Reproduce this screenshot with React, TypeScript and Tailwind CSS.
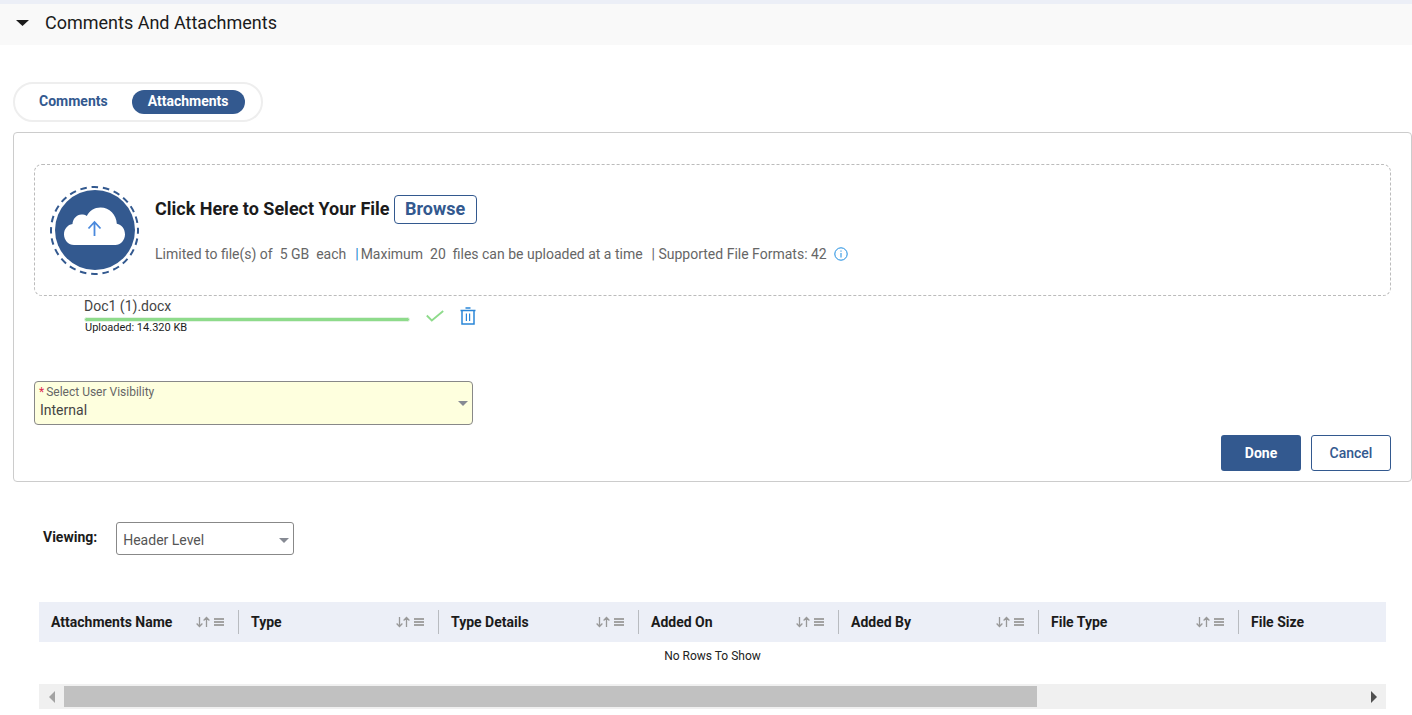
import { useState } from 'react';

const columns = ['Attachments Name', 'Type', 'Type Details', 'Added On', 'Added By', 'File Type', 'File Size'];

const tabs = ['Comments', 'Attachments'];

function UploadBadge() {
  return (
    <svg className="h-[90px] w-[90px] shrink-0" viewBox="0 0 90 90" fill="none">
      <circle cx="44.500" cy="45.500" r="43.500" stroke="#33598f" strokeWidth="2" strokeDasharray="6.6 4.788" strokeDashoffset="3.300" />
      <circle cx="45" cy="45" r="40" fill="#33598f" />
      <path
        fill="#fff"
        d="M24 60c-5.500 0-10-4.800-10-10.500 0-5.400 3.700-9.800 8.500-10.400C22.700 34 26.600 29.500 31.500 29.500c2 0 3.900.3 5.300 1.600C39.300 25.900 44.500 22.500 50.500 22.500c9 0 16 7.200 16.300 16.300C71.600 39.600 75 44 75 49.500c0 5.700-4.500 10.500-9.700 10.500z"
      />
      <path stroke="#4a89dc" strokeWidth="1.800" d="M44.500 51V37.500M38.500 43.500l6-6.500 6 6.500" />
    </svg>
  );
}

function InfoIcon() {
  return (
    <svg className="h-[14px] w-[14px]" viewBox="0 0 14 14" fill="none" stroke="#1a8be0">
      <circle cx="7" cy="7" r="6.200" />
      <path d="M7 6v4.500M7 3.500v1.200" />
    </svg>
  );
}

function CheckIcon() {
  return (
    <svg className="h-3 w-[18px]" viewBox="0 0 18 12" fill="none" stroke="#8edb8b" strokeWidth="1.800">
      <path d="M.8 5.500l5 5L17.200 1" />
    </svg>
  );
}

function TrashIcon() {
  return (
    <svg className="h-[18px] w-4" viewBox="0 0 16 18" fill="none" stroke="#2a86d8">
      <path strokeWidth="1.500" d="M5.500.9h5M.5 3.400h15M2 3.500v13.500h12V3.500" />
      <path strokeWidth="1.200" d="M6.400 6.500v7.500M9.600 6.500v7.500" />
    </svg>
  );
}

function SortIcon() {
  return (
    <svg className="h-3 w-[14px]" viewBox="0 0 14 12" fill="none" stroke="#999" strokeWidth="1.300">
      <path d="M3.500 1v9.500M.6 7.500l2.900 3 2.900-3M10.500 11V1.500M7.600 4.500l2.900-3 2.900 3" />
    </svg>
  );
}

function MenuIcon() {
  return (
    <svg className="h-2 w-[10px]" viewBox="0 0 10 8" fill="#a3a3a3">
      <path d="M0 0h10v2H0zM0 3h10v2H0zM0 6h10v2H0z" />
    </svg>
  );
}

function Caret() {
  return (
    <svg className="h-[5px] w-[10px]" viewBox="0 0 10 5" fill="#868a93">
      <path d="M0 0h10L5 5z" />
    </svg>
  );
}

export default function App() {
  const [activeTab, setActiveTab] = useState('Attachments');
  const [visibility, setVisibility] = useState('Internal');
  const [level, setLevel] = useState('Header Level');

  return (
    <div className="bg-white font-['Roboto',sans-serif] text-sm text-[#1b1b1b]">
      <header className="border-t-4 border-[#eceff7] bg-[#f9f9f9]">
        <button type="button" className="flex h-[41px] w-full items-center gap-4 px-4 pb-1">
          <svg className="h-[6px] w-[13px]" viewBox="0 0 13 6" fill="#1b1b1b">
            <path d="M0 0h13L6.500 6z" />
          </svg>
          <span className="text-lg">Comments And Attachments</span>
        </button>
      </header>

      <main className="pt-[37px] pl-[13px]">
        <div role="tablist" className="flex h-10 w-[250px] items-center rounded-full border-2 border-[#eee] pr-4 pl-2">
          {tabs.map((tab) => (
            <button
              key={tab}
              type="button"
              role="tab"
              aria-selected={activeTab === tab}
              onClick={() => setActiveTab(tab)}
              className={`h-6 rounded-full px-4 pb-[2px] font-bold ${
                activeTab === tab ? 'ml-2 bg-[#33598f] text-white' : 'text-[#33598f]'
              }`}
            >
              {tab}
            </button>
          ))}
        </div>

        <section className="mt-[10px] rounded border border-[#ccc] px-5 pt-[31px] pb-[10px]">
          {/* Drop zone */}
          <div className="flex h-[132px] items-center rounded-lg border border-dashed border-[#bbb] px-[15px]">
            <UploadBadge />
            <div className="ml-[15px] pb-[2px]">
              <div className="flex items-center gap-1 text-lg font-bold">
                <span>Click Here to Select Your File</span>
                <button type="button" className="h-[29px] w-[83px] rounded border border-[#33598f] leading-none text-[#33598f]">
                  Browse
                </button>
              </div>
              <div className="mt-5 flex items-center gap-[7px] text-[#666]">
                <p className="flex gap-[2px] whitespace-pre">
                  <span>{'Limited to file(s) of  5 GB  each  '}</span>
                  <span className="text-[#1a85cf]">|</span>
                  <span>{'Maximum  20  files can be uploaded at a time  '}</span>
                  <span>| Supported File Formats: 42</span>
                </p>
                <button type="button" aria-label="Supported formats">
                  <InfoIcon />
                </button>
              </div>
            </div>
          </div>

          {/* Uploaded file */}
          <div className="ml-[50px] flex items-center">
            <div className="w-[326px]">
              <p className="text-[#444]">Doc1 (1).docx</p>
              <div className="mt-px h-[5px] rounded-full border border-[#e4f3e4] bg-[#8edb8b]" />
              <p className="pl-px text-[11px] leading-3">Uploaded: 14.320 KB</p>
            </div>
            <div className="ml-4 flex items-center gap-4 pt-[2px]">
              <CheckIcon />
              <button type="button" aria-label="Delete file">
                <TrashIcon />
              </button>
            </div>
          </div>

          <div className="relative mt-[47px] h-11 w-[439px]">
            <label htmlFor="visibility" className="absolute top-[3px] left-[5px] flex gap-[2px] text-xs text-[#666]">
              <span className="text-[#e0284f]">*</span>
              <span>Select User Visibility</span>
            </label>
            <select
              id="visibility"
              value={visibility}
              onChange={(e) => setVisibility(e.target.value)}
              className="h-full w-full appearance-none rounded border border-[#888] bg-[#feffde] pt-[14px] pl-[5px] text-[#444]"
            >
              <option>Internal</option>
              <option>External</option>
            </select>
            <span className="pointer-events-none absolute inset-y-0 right-[5px] flex items-center">
              <Caret />
            </span>
          </div>

          <div className="mt-[10px] flex justify-end gap-[10px]">
            <button type="button" className="h-9 w-20 rounded-[3px] bg-[#33598f] font-bold text-white">
              Done
            </button>
            <button type="button" className="h-9 w-20 rounded-[3px] border border-[#33598f] font-medium text-[#33598f]">
              Cancel
            </button>
          </div>
        </section>

        <div className="mt-10 ml-[30px] flex items-center">
          <label htmlFor="level" className="pb-1 font-bold">
            Viewing:
          </label>
          <div className="relative ml-[19px] h-[33px] w-[178px]">
            <select
              id="level"
              value={level}
              onChange={(e) => setLevel(e.target.value)}
              className="h-full w-full appearance-none rounded-[3px] border border-[#888] bg-white pt-[3px] pl-[6px] text-[#555]"
            >
              <option>Header Level</option>
              <option>Line Level</option>
            </select>
            <span className="pointer-events-none absolute inset-y-0 right-[5px] flex items-center pt-1">
              <Caret />
            </span>
          </div>
        </div>

        {/* Attachments grid */}
        <div className="mt-[47px] mr-[26px] ml-[26px]">
          <div className="overflow-hidden">
            <table className="w-[1400px] table-fixed bg-[#eceff7]">
              <thead>
                <tr>
                  {columns.map((col) => (
                    <th key={col} className="h-10 w-[200px] p-0 text-left font-bold">
                      <div className="flex h-6 items-center border-r border-[#b8bbc0] pr-[14px] pl-3">
                        <span className="flex-1">{col}</span>
                        <button type="button" aria-label={`Sort by ${col}`}>
                          <SortIcon />
                        </button>
                        <button type="button" aria-label={`${col} menu`} className="ml-1">
                          <MenuIcon />
                        </button>
                      </div>
                    </th>
                  ))}
                </tr>
              </thead>
            </table>
          </div>
          <p className="pt-[6px] text-center text-xs text-[#222]">No Rows To Show</p>
          <div className="mt-5 flex h-[25px] items-center bg-[#f0f0f0]">
            <button type="button" aria-label="Scroll left" className="flex w-[25px] justify-center">
              <svg className="h-3 w-[6px]" viewBox="0 0 6 12" fill="#a3a3a3">
                <path d="M6 0v12L0 6z" />
              </svg>
            </button>
            <div className="flex-1">
              <div className="h-[21px] w-3/4 bg-[#c1c1c1]" />
            </div>
            <button type="button" aria-label="Scroll right" className="flex w-[25px] justify-center">
              <svg className="h-3 w-[6px]" viewBox="0 0 6 12" fill="#505050">
                <path d="M0 0v12l6-6z" />
              </svg>
            </button>
          </div>
        </div>
      </main>
    </div>
  );
}
